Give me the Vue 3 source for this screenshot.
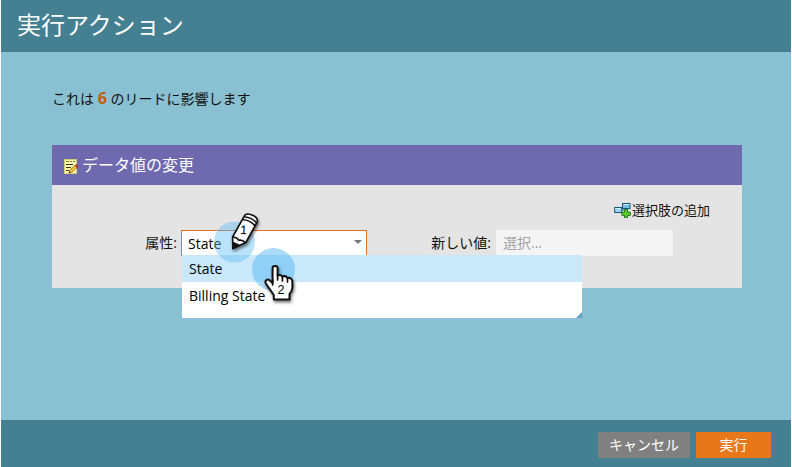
<script setup>
import { ref } from 'vue'
const options = ['State', 'Billing State']
const selected = ref('State')
</script>

<template>
  <main class="dialog">
    <header class="title">実行アクション</header>
    <section class="body">
      <p class="summary">これは <b>6</b> のリードに影響します</p>
      <div class="panel">
        <h2 class="panel-head">
          <svg class="note-icon" viewBox="0 0 16 17" width="16" height="17">
            <rect x="1.5" y="1.5" width="12" height="14" fill="#fff9a8" stroke="#d5ca7b" />
            <path d="M3 3.5h3M7 3.5h2M10 3.5h2" stroke="#8c7b40" />
            <path d="M3 6.5h7M3 9.5h5M3 12.5h3" stroke="#393420" />
            <path d="M6 15l1-3L12 7.5l2 2L9 14z" fill="#f4c63b" stroke="#8b6418" stroke-width=".8" />
            <path d="M12 7.3l1.3-.8 1.7 1.4-.9 1.6z" fill="#cc3038" stroke="#812333" stroke-width=".5" />
            <path d="M6 15l.5-1.7L8 14.5z" fill="#302611" />
          </svg>
          <span>データ値の変更</span>
        </h2>
        <div class="panel-body">
          <div class="add-row">
            <svg class="add-icon" viewBox="0 0 17 16" width="17" height="16">
              <rect x=".7" y="5.5" width="7" height="5" fill="#9bd5f5" stroke="#16547c" />
              <rect x="8.5" y="1.5" width="7.5" height="5" fill="#77bfea" stroke="#16547c" />
              <path d="M1 6.5h6M9 2.5h6.5" stroke="#c9edff" />
              <path d="M7.5 8h3" stroke="#16547c" />
              <path d="M10.5 7.5h3v2.8h2.9v3h-2.9v2.3h-3v-2.3H7.8v-3h2.7z" fill="#65cb28" stroke="#187421" />
            </svg>
            <span>選択肢の追加</span>
          </div>
          <div class="fields">
            <label class="attribute-label">属性:</label>
            <div class="select">
              <span>{{ selected }}</span>
              <i class="caret"></i>
            </div>
            <label class="value-label">新しい値:</label>
            <div class="value">選択...</div>
          </div>
        </div>
        <ul class="menu">
          <li v-for="(option, i) in options" :key="option" :class="{ active: i === 0 }">{{ option }}</li>
          <svg class="grip" width="6" height="6"><path d="M6 0v6H0z" fill="#639fc3" /></svg>
        </ul>
      </div>
    </section>
    <footer class="actions">
      <button class="cancel">キャンセル</button>
      <button class="run">実行</button>
    </footer>

    <svg class="marker pencil" viewBox="0 0 60 64" width="60" height="64">
      <circle cx="20.5" cy="38" r="20.5" fill="#5ab9f3" fill-opacity=".42" />
      <g class="shadow" stroke="#111" stroke-width="1.6" stroke-linejoin="round">
        <path d="M18.8 44.5L18.6 33 29.8 13Q31.3 9 36.5 10.4 44.5 12.8 43.2 18L31.8 38.5z" fill="#fff" />
        <path d="M18.6 33.3q4.4-.6 6.2 3 3.5-.8 6.6 2.3" fill="none" />
        <path d="M18.8 44.5v-6l6.2 2.7z" fill="#111" />
        <path d="M28.6 15.5q7.5.6 12.6 6.4M30.2 12.7q7.8.8 12.4 6.2" fill="none" />
      </g>
      <text x="26.4" y="30.3" transform="rotate(3 30 25)">1</text>
    </svg>
    <svg class="marker hand" viewBox="0 0 52 60" width="52" height="60">
      <circle cx="21.5" cy="21.5" r="21.5" fill="#52b4f2" fill-opacity=".48" />
      <path class="shadow" d="M20.6 35V20C20.6 17.2 25.6 17.2 25.6 20V27.5Q28.5 26 30.4 28.6 33.5 27.2 35.5 30 39.8 29.2 40.4 33.5V39.5Q40 43.5 37.5 46V51.5H21.8V47L18 41.5 13.8 35.5Q12.6 32.5 15.2 31.7 17 31.2 18.2 33z" fill="#fff" stroke="#111" stroke-width="2" stroke-linejoin="round" />
      <path d="M25.6 26v6M30.4 28v5M35.5 30v4M20.6 32v5" fill="none" stroke="#111" stroke-width="1.7" stroke-linecap="round" />
      <text x="25.6" y="46.2">2</text>
    </svg>
  </main>
</template>

<style>
body {
  background: #fff;
}
</style>

<style scoped>
* {
  box-sizing: border-box;
}
.dialog {
  position: relative;
  width: 790px;
  height: 467px;
  margin-left: 1px;
  display: flex;
  flex-direction: column;
  background: #89c1d3;
  font: 14px/20px "Open Sans", "Noto Sans CJK JP", sans-serif;
  color: #111;
}
.dialog, button {
  font-family: "Open Sans", "Noto Sans CJK JP", sans-serif;
}
.title {
  height: 52px;
  padding: 7px 16px;
  background: #457f92;
  color: #fff;
  font-size: 24px;
  line-height: 36px;
}
.body {
  flex: 1;
  padding: 35px 49px 0 51px;
}
.summary {
  margin: 0;
  height: 58px;
  line-height: 22px;
}
.summary b {
  color: #c45c00;
  font-size: 16px;
  font-weight: 700;
}
.panel {
  position: relative;
  width: 690px;
  height: 143px;
  background: #e4e4e4;
}
.panel-head {
  height: 40px;
  margin: 0;
  padding-left: 11px;
  display: flex;
  align-items: center;
  gap: 3px;
  background: #6f6aaf;
  color: #fff;
  font-size: 16px;
  font-weight: 400;
}
.note-icon {
  margin-top: 3px;
}
.panel-body {
  padding-top: 15px;
}
.add-row {
  display: flex;
  align-items: center;
  justify-content: flex-end;
  height: 20px;
  padding-right: 32px;
  gap: 1px;
  font-size: 13px;
}
.fields {
  display: flex;
  height: 26px;
  margin-top: 10px;
  line-height: 26px;
}
.attribute-label {
  width: 129px;
  padding-right: 4px;
  text-align: right;
}
.select {
  width: 186px;
  height: 26px;
  display: flex;
  justify-content: space-between;
  padding: 0 4px 0 6px;
  border: 1px solid #df7426;
  background: #fff;
  color: #000;
}
.caret {
  width: 0;
  height: 0;
  margin-top: 9px;
  border: 4.5px solid transparent;
  border-top-color: #777;
  border-bottom: 0;
}
.value-label {
  width: 129px;
  padding-right: 5px;
  text-align: right;
}
.value {
  width: 177px;
  padding-left: 7px;
  background: #f4f4f4;
  color: #a4a4a4;
}
.menu {
  position: absolute;
  left: 130px;
  top: 110px;
  width: 400px;
  height: 63px;
  margin: 0;
  padding: 0;
  list-style: none;
  background: #fff;
  color: #000;
}
.menu li {
  height: 27px;
  padding-left: 7px;
  line-height: 27px;
}
.menu .active {
  background: #c9e8f9;
}
.grip {
  position: absolute;
  right: 0;
  bottom: 0;
}
.actions {
  height: 47px;
  display: flex;
  justify-content: flex-end;
  gap: 6px;
  padding: 12px 20px 0 0;
  background: #457f92;
}
button {
  height: 26px;
  border: 0;
  padding: 0;
  color: #fff;
  font-size: 14px;
  line-height: 26px;
}
.cancel {
  width: 92px;
  background: #808080;
}
.run {
  width: 75px;
  background: #e8771a;
}
.marker {
  position: absolute;
  overflow: visible;
}
.pencil {
  left: 213px;
  top: 204px;
}
.hand {
  left: 251px;
  top: 248px;
}
.marker text {
  font: 12.5px "Liberation Sans", sans-serif;
  fill: #000;
}
.shadow {
  filter: drop-shadow(1px 2px 1.5px rgba(0, 0, 0, .55));
}
</style>
